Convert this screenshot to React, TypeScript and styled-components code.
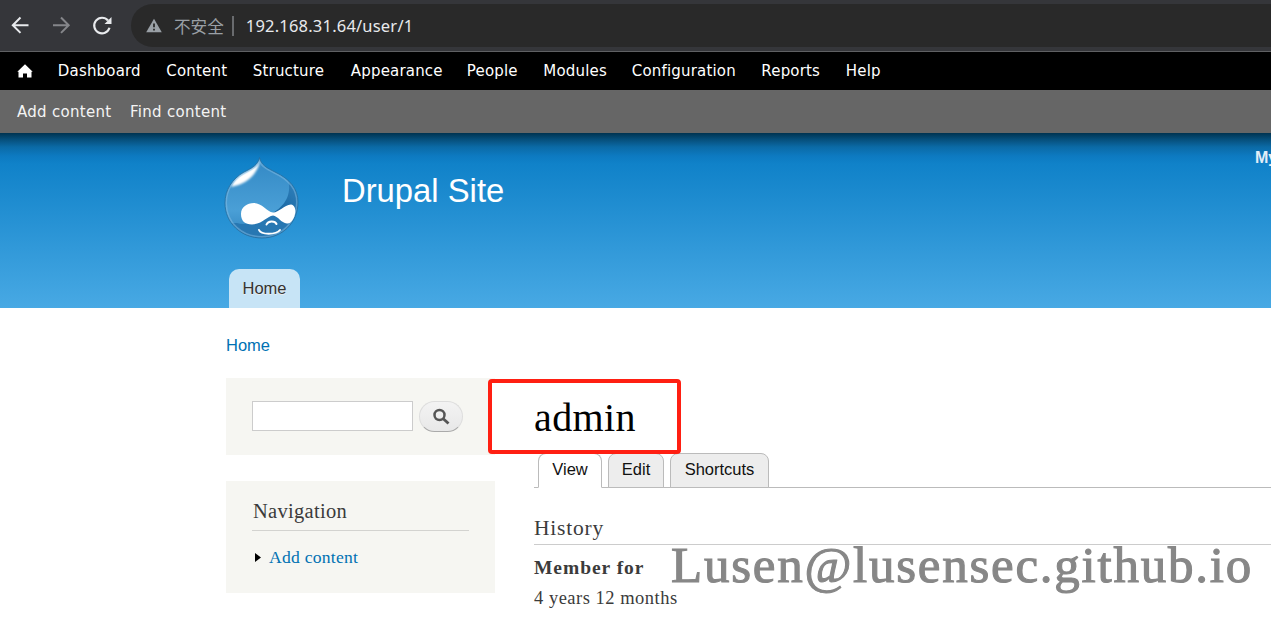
import React from "react";
import styled, { createGlobalStyle } from "styled-components";

const Global = createGlobalStyle`
  *, *::before { box-sizing: border-box; }
  body { margin: 0; background: #fff; overflow: hidden; }
`;

const sans = `"Liberation Sans", Arial, sans-serif`;
const serif = `"Liberation Serif", Georgia, serif`;

const Page = styled.div`
  position: relative;
  width: 1271px;
  height: 620px;
  overflow: hidden;
  background: #fff;
  color: #3b3b3b;
  font-family: ${serif};
  white-space: nowrap;
`;

const BrowserBar = styled.div`
  display: flex;
  align-items: center;
  height: 52px;
  background: #35363a;
  border-bottom: 1px solid #5f6063;
`;

const BrowserButtons = styled.div`
  display: flex;
  flex: none;
  width: 131px;
  height: 50px;
`;

const AddressBar = styled.div`
  display: flex;
  align-items: center;
  flex: 1;
  height: 43px;
  padding-left: 15px;
  border-radius: 22px 0 0 22px;
  background: #292929;
`;

const Insecure = styled.span`
  margin-left: 12px;
  color: #9aa0a6;
  font: 16.6px/24px "Noto Sans CJK SC", sans-serif;
`;

const Separator = styled.span`
  width: 2px;
  height: 20px;
  margin: 0 12px 0 8px;
  background: #696b6e;
`;

const Url = styled.span`
  color: #e8eaed;
  font: 16.5px/24px "Noto Sans", sans-serif;
  letter-spacing: 0.2px;
`;

const Toolbar = styled.nav`
  display: flex;
  align-items: center;
  height: 38px;
  padding-left: 17px;
  background: #000;
`;

const ToolbarLink = styled.a<{ $w: number }>`
  flex: none;
  width: ${(p) => p.$w}px;
  color: #fff;
  font: 15px/20px "DejaVu Sans", Verdana, sans-serif;
  letter-spacing: 0.18px;
`;

const HomeLink = styled.a`
  display: flex;
  width: 40.8px;
`;

const ShortcutBar = styled(Toolbar)`
  height: 43px;
  background: #666;
`;

const ShortcutLink = styled(ToolbarLink)`
  color: #f4f4f4;
  letter-spacing: 0.3px;
`;

const Header = styled.header`
  display: flex;
  flex-direction: column;
  justify-content: space-between;
  height: 175px;
  padding: 24px 0 0 224px;
  background: linear-gradient(#003350 0, #064d78 6px, #0b6aa6 14px, #0d7ac1 23px, #1082c9 31px, #48a9e4 100%);
`;

const Brand = styled.div`
  display: flex;
  align-items: flex-start;
`;

const SiteName = styled.h1`
  flex: 1;
  margin: 14px 0 0 42px;
  color: #fff;
  font: 400 32.8px/40px ${sans};
`;

const AccountLink = styled.a`
  width: 16px;
  margin-top: -9px;
  overflow: hidden;
  color: #e2eef8;
  font: 700 16px/20px ${sans};
`;

const HomeTab = styled.a`
  display: block;
  width: 71px;
  height: 39px;
  margin-left: 5px;
  border-radius: 10px 10px 0 0;
  background: #c7e4f6;
  color: #333;
  font: 16.5px/39px ${sans};
  text-align: center;
  text-shadow: 0 1px #eee;
`;

const Breadcrumb = styled.div`
  padding: 27px 0 0 226px;
  color: #0071b3;
  font: 16.5px/20px ${sans};
`;

const Columns = styled.main`
  display: flex;
  gap: 39px;
  padding: 23px 0 0 226px;
`;

const Sidebar = styled.aside`
  display: flex;
  flex-direction: column;
  flex: none;
  gap: 26px;
  width: 269px;
`;

const SearchBlock = styled.form`
  display: flex;
  align-items: flex-start;
  gap: 6px;
  height: 77px;
  padding: 23px 26px;
  background: #f6f6f2;
`;

const SearchInput = styled.input`
  width: 161px;
  height: 30px;
  border: 1px solid #ccc;
  border-radius: 0;
  background: #fff;
`;

const SearchButton = styled.button`
  display: flex;
  align-items: center;
  justify-content: center;
  width: 44px;
  height: 31px;
  padding: 0;
  border: 1px solid #ddd;
  border-bottom-color: #aaa;
  border-radius: 16px;
  background: linear-gradient(#f3f3f3, #e8e8e8);
`;

const NavBlock = styled.section`
  height: 112px;
  padding: 18px 26px;
  background: #f6f6f2;
`;

const NavTitle = styled.h2`
  height: 32px;
  margin: 0;
  padding-left: 1px;
  border-bottom: 1px solid #d3d3d0;
  font: 400 20.5px/25px ${serif};
  letter-spacing: 0.3px;
`;

const NavLink = styled.a`
  display: flex;
  align-items: center;
  gap: 8px;
  margin: 15px 0 0 3px;
  color: #0071b3;
  font: 17.6px/22px ${serif};
  letter-spacing: 0.25px;
`;

const Content = styled.section`
  flex: 1;
  padding-top: 17px;
`;

/* The name is framed; the frame's fill also hides the corner of the sidebar. */
const Title = styled.h1`
  position: relative;
  isolation: isolate;
  margin: 0;
  color: #000;
  font: 400 40px/46px ${serif};
  letter-spacing: 0.4px;

  &::before {
    content: "";
    position: absolute;
    z-index: -1;
    left: -46px;
    top: -16px;
    width: 193px;
    height: 75px;
    border: 4px solid #ff1f12;
    border-radius: 4px;
    background: #fff;
  }
`;

const Tabs = styled.div`
  display: flex;
  gap: 6px;
  height: 35px;
  margin-top: 12px;
  padding-left: 4px;
  border-bottom: 1px solid #bbb;
`;

const Tab = styled.a<{ $w: number; $active?: boolean }>`
  width: ${(p) => p.$w}px;
  height: 35px;
  border: 1px solid #bbb;
  border-bottom-color: ${(p) => (p.$active ? "#fff" : "#bbb")};
  border-radius: 8px 8px 0 0;
  background: ${(p) => (p.$active ? "#fff" : "#ededed")};
  color: #111;
  font: 16.5px/31px ${sans};
  text-align: center;
`;

const SectionTitle = styled.h3`
  height: 31px;
  margin: 26px 0 0;
  border-bottom: 1px solid #ccc;
  font: 400 21.5px/28px ${serif};
  letter-spacing: 0.8px;
`;

const Label = styled.div`
  margin-top: 11px;
  font: 700 19.5px/24px ${serif};
  letter-spacing: 0.95px;
`;

const Value = styled.div`
  margin-top: 6px;
  font: 18.5px/24px ${serif};
  letter-spacing: 0.5px;
`;

const Watermark = styled.div`
  position: absolute;
  left: 671px;
  top: 537px;
  color: #878787;
  font: 51px/56px ${serif};
  letter-spacing: 1.75px;
  -webkit-text-stroke: 1.1px #878787;
`;

const links: [string, number][] = [
  ["Dashboard", 108.5], ["Content", 86.5], ["Structure", 98], ["Appearance", 116],
  ["People", 76.5], ["Modules", 88.5], ["Configuration", 129.5], ["Reports", 84.5], ["Help", 50],
];

const dropOutline =
  "M35.5 .5C37 8 43 11 51 15C66 22 74 32 74 45C74 66 58 81 38 81C17 81 1 66 1 46C1 33 8 22 20 15C28 11 34 8 35.5 .5Z";

const Drop = () => (
  <svg width="76" height="82" viewBox="0 0 76 82">
    <defs>
      <linearGradient id="body" x1="0" y1="0" x2="0" y2="1">
        <stop offset="0" stopColor="#3288c4" />
        <stop offset=".65" stopColor="#4a9fd6" />
        <stop offset="1" stopColor="#2f82bd" />
      </linearGradient>
      <linearGradient id="shade" x1="1" y1="0" x2=".3" y2="1">
        <stop offset="0" stopColor="#3384bf" />
        <stop offset="1" stopColor="#1765a0" />
      </linearGradient>
      <filter id="soft" x="-20%" y="-20%" width="140%" height="140%"><feGaussianBlur stdDeviation=".9" /></filter>
      <clipPath id="dropClip"><path d={dropOutline} /></clipPath>
    </defs>
    <g clipPath="url(#dropClip)">
      <rect width="76" height="82" fill="url(#body)" />
      <path d="M64 22C69 42 56 52 47 57Q62 65 76 56V30Z" fill="url(#shade)" />
      <path d="M0 66H13C25 70 40 60 50 58Q64 69 76 55V82H0Z" fill="#2777b2" />
      <path d="M35.5 2C36 7 34 11 32 14C27 23 17 28 7 30C10 22 16 17 22 15C29 11 34 9 35.5 2Z" fill="#fff" filter="url(#soft)" />
      <path d={dropOutline} fill="none" stroke="#8cc4e8" strokeWidth="4" strokeOpacity=".45" />
    </g>
    <path d={dropOutline} fill="none" stroke="#236b9e" strokeOpacity=".8" />
    <path d="M17 57C17 50 23 46 30 46C38 46 43 55 49 55.5C55 55.5 60 48 67 47.5C71 48 72 53 71 57C70 62 67 67 63 66.5C57 66 54 59 49 58.5C43 59 39 67 28 67.5C21 67.5 17 64 17 57Z" fill="#fff" />
    <path d="M42.5 67.5C44 63.5 51 63.5 52.5 67M35 73C37 78 52 78 56 73" fill="none" stroke="#fff" strokeWidth="2" strokeLinecap="round" />
  </svg>
);

export default function App() {
  return (
    <Page>
      <Global />
      <BrowserBar>
        <BrowserButtons>
          <svg width="131" height="50" viewBox="0 0 131 50" fill="none" stroke="#e8eaed" strokeWidth="2">
            <path d="M28.5 24.2H13M20.5 16.5L12.8 24.2L20.5 31.9" />
            <path d="M53 24.2H68.5M61 16.5L68.7 24.2L61 31.9" stroke="#85868a" />
            <path d="M108 19.5A7.8 7.8 0 1 0 109.5 26.8" strokeWidth="2.2" />
            <path d="M111.5 16V23H104.5Z" fill="#e8eaed" stroke="none" />
          </svg>
        </BrowserButtons>
        <AddressBar>
          <svg width="16" height="15" viewBox="0 0 16 15">
            <path d="M8 .7L15.8 14.3H.2Z" fill="#9aa0a6" />
            <path d="M8 5.5V9.3M8 10.7V12.5" stroke="#292929" strokeWidth="1.8" />
          </svg>
          <Insecure>不安全</Insecure>
          <Separator />
          <Url>192.168.31.64/user/1</Url>
        </AddressBar>
      </BrowserBar>
      <Toolbar>
        <HomeLink>
          <svg width="16" height="14" viewBox="0 0 16 14">
            <path d="M8 .3L15.7 7.7H14.5V13.5H10V9.5H6V13.5H1.5V7.7H.3Z" fill="#fff" />
          </svg>
        </HomeLink>
        {links.map(([label, w]) => <ToolbarLink key={label} $w={w}>{label}</ToolbarLink>)}
      </Toolbar>
      <ShortcutBar>
        <ShortcutLink $w={113}>Add content</ShortcutLink>
        <ShortcutLink $w={110}>Find content</ShortcutLink>
      </ShortcutBar>
      <Header>
        <Brand>
          <Drop />
          <SiteName>Drupal Site</SiteName>
          <AccountLink>My</AccountLink>
        </Brand>
        <HomeTab>Home</HomeTab>
      </Header>
      <Breadcrumb>Home</Breadcrumb>
      <Columns>
        <Sidebar>
          <SearchBlock>
            <SearchInput />
            <SearchButton type="button">
              <svg width="18" height="18" viewBox="0 0 18 18" fill="none" stroke="#555">
                <circle cx="7.5" cy="7" r="5" strokeWidth="2.5" />
                <path d="M11 10.5L16.5 15.5" strokeWidth="2.8" />
              </svg>
            </SearchButton>
          </SearchBlock>
          <NavBlock>
            <NavTitle>Navigation</NavTitle>
            <NavLink>
              <svg width="6" height="9" viewBox="0 0 6 9"><path d="M0 0L6 4.5L0 9Z" fill="#000" /></svg>
              Add content
            </NavLink>
          </NavBlock>
        </Sidebar>
        <Content>
          <Title>admin</Title>
          <Tabs>
            <Tab $w={64} $active>View</Tab>
            <Tab $w={56}>Edit</Tab>
            <Tab $w={99}>Shortcuts</Tab>
          </Tabs>
          <SectionTitle>History</SectionTitle>
          <Label>Member for</Label>
          <Value>4 years 12 months</Value>
        </Content>
      </Columns>
      <Watermark>Lusen@lusensec.github.io</Watermark>
    </Page>
  );
}
